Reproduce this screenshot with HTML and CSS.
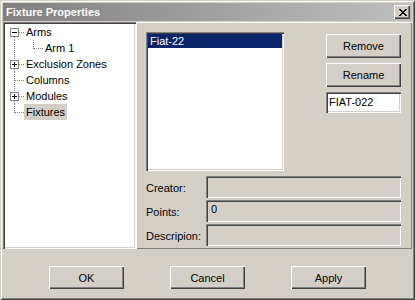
FILE: index.html
```html
<!DOCTYPE html>
<html lang="en">

<head>
    <meta charset="UTF-8">
    <title>Fixture Properties</title>
    <link rel="stylesheet" href="styles.css">
</head>

<body>
    <div class="window">
        <div class="titlebar">
            <span class="title">Fixture Properties</span>
            <div class="close">
                <svg width="8" height="7" viewBox="0 0 8 7">
                    <path d="M0 0h2v1h1v1h2v-1h1v-1h2v1h-1v1h-1v1h-1v1h1v1h1v1h1v1h-2v-1h-1v-1h-2v1h-1v1h-2v-1h1v-1h1v-1h1v-1h-1v-1h-1v-1h-1z" fill="#000"/>
                </svg>
            </div>
        </div>

        <div class="main">
            <div class="tree">
                <div class="row">
                    <svg class="guide" width="19" height="16">
                        <path d="M9.5 13v3" class="dots"/>
                        <path d="M14 8.5h5" class="dots"/>
                        <rect x="5.5" y="4.5" width="8" height="8" class="box"/>
                        <path d="M7 8.5h5" class="sign"/>
                    </svg>
                    <span class="label">Arms</span>
                </div>
                <div class="row">
                    <svg class="guide" width="38" height="16">
                        <path d="M9.5 0v16" class="dots"/>
                        <path d="M28.5 0v9" class="dots"/>
                        <path d="M29 8.5h9" class="dots"/>
                    </svg>
                    <span class="label">Arm 1</span>
                </div>
                <div class="row">
                    <svg class="guide" width="19" height="16">
                        <path d="M9.5 0v4M9.5 13v3" class="dots"/>
                        <path d="M14 8.5h5" class="dots"/>
                        <rect x="5.5" y="4.5" width="8" height="8" class="box"/>
                        <path d="M7 8.5h5M9.5 6v5" class="sign"/>
                    </svg>
                    <span class="label">Exclusion Zones</span>
                </div>
                <div class="row">
                    <svg class="guide" width="19" height="16">
                        <path d="M9.5 0v16" class="dots"/>
                        <path d="M10 8.5h9" class="dots"/>
                    </svg>
                    <span class="label">Columns</span>
                </div>
                <div class="row">
                    <svg class="guide" width="19" height="16">
                        <path d="M9.5 0v4M9.5 13v3" class="dots"/>
                        <path d="M14 8.5h5" class="dots"/>
                        <rect x="5.5" y="4.5" width="8" height="8" class="box"/>
                        <path d="M7 8.5h5M9.5 6v5" class="sign"/>
                    </svg>
                    <span class="label">Modules</span>
                </div>
                <div class="row">
                    <svg class="guide" width="19" height="16">
                        <path d="M9.5 0v9" class="dots"/>
                        <path d="M10 8.5h9" class="dots"/>
                    </svg>
                    <span class="label current">Fixtures</span>
                </div>
            </div>

            <div class="panel">
                <div class="top">
                    <div class="listbox">
                        <div class="item selected">Fiat-22</div>
                    </div>
                    <div class="actions">
                        <div class="btn">Remove</div>
                        <div class="btn">Rename</div>
                        <div class="textbox">FIAT-022</div>
                    </div>
                </div>
                <div class="fields">
                    <div class="field-row">
                        <span class="field-label">Creator:</span>
                        <div class="field"></div>
                    </div>
                    <div class="field-row">
                        <span class="field-label">Points:</span>
                        <div class="field">0</div>
                    </div>
                    <div class="field-row">
                        <span class="field-label">Descripion:</span>
                        <div class="field"></div>
                    </div>
                </div>
            </div>
        </div>

        <div class="footer">
            <div class="btn">OK</div>
            <div class="btn">Cancel</div>
            <div class="btn">Apply</div>
        </div>
    </div>
</body>

</html>
```

FILE: styles.css
```css
body {
    margin: 0;
    background-color: #d4d0c8;
    font-family: "Liberation Sans", Arial, sans-serif;
    font-size: 11px;
    color: black;
}

.window {
    width: 415px;
    height: 300px;
    box-sizing: border-box;
    padding: 3px;
    background-color: #d4d0c8;
    box-shadow: inset 1px 1px #d4d0c8, inset -1px -1px #404040, inset 2px 2px #ffffff, inset -2px -2px #808080;
    display: flex;
    flex-direction: column;
}

.titlebar {
    height: 18px;
    background: linear-gradient(to right, #808080, #c0c0c0);
    display: flex;
    align-items: center;
    justify-content: space-between;
    padding: 0 2px 0 3px;
}

.title {
    color: white;
    font-weight: bold;
    font-size: 11px;
}

.close {
    width: 16px;
    height: 14px;
    box-sizing: border-box;
    background-color: #d4d0c8;
    box-shadow: inset 1px 1px #ffffff, inset -1px -1px #404040, inset -2px -2px #808080;
    display: flex;
    align-items: center;
    justify-content: center;
    padding-left: 1px;
}

.main {
    margin-top: 1px;
    height: 227px;
    display: flex;
}

/* tree view */

.tree {
    width: 133px;
    box-sizing: border-box;
    padding: 2px;
    background-color: white;
    box-shadow: inset 1px 1px #808080, inset 2px 2px #404040, inset -1px -1px #ffffff, inset -2px -2px #d4d0c8;
}

.row {
    height: 16px;
    display: flex;
    align-items: center;
}

.guide {
    flex-shrink: 0;
    shape-rendering: crispEdges;
}

.dots {
    stroke: #808080;
    stroke-width: 1;
    stroke-dasharray: 1 1;
    fill: none;
}

.box {
    stroke: #808080;
    fill: white;
}

.sign {
    stroke: black;
    stroke-width: 1;
}

.label {
    padding: 1px 2px;
    line-height: 14px;
    white-space: nowrap;
}

.label.current {
    background-color: #d4d0c8;
}

/* right panel */

.panel {
    flex: 1;
    box-shadow: inset 1px 1px #ffffff, inset -1px -1px #808080;
    display: flex;
    flex-direction: column;
    padding: 10px 11px 0 10px;
}

.top {
    display: flex;
}

.listbox {
    width: 138px;
    height: 139px;
    box-sizing: border-box;
    padding: 2px;
    background-color: white;
    box-shadow: inset 1px 1px #808080, inset 2px 2px #404040, inset -1px -1px #ffffff, inset -2px -2px #d4d0c8;
}

.item {
    height: 14px;
    line-height: 14px;
    padding-left: 2px;
}

.item.selected {
    background-color: #0a246a;
    color: white;
}

.actions {
    margin-left: auto;
    padding-top: 2px;
    display: flex;
    flex-direction: column;
    gap: 5px;
}

.btn {
    width: 75px;
    height: 24px;
    box-sizing: border-box;
    background-color: #d4d0c8;
    box-shadow: inset 1px 1px #ffffff, inset -1px -1px #404040, inset -2px -2px #808080;
    display: flex;
    align-items: center;
    justify-content: center;
}

.textbox {
    width: 75px;
    height: 21px;
    box-sizing: border-box;
    background-color: white;
    box-shadow: inset 1px 1px #808080, inset 2px 2px #404040, inset -1px -1px #ffffff, inset -2px -2px #d4d0c8;
    padding: 4px 3px;
    line-height: 13px;
}

.fields {
    margin-top: 5px;
    display: flex;
    flex-direction: column;
    gap: 2px;
}

.field-row {
    display: flex;
    align-items: center;
}

.field-label {
    width: 60px;
    flex-shrink: 0;
    padding-top: 2px;
}

.field {
    flex: 1;
    height: 22px;
    box-sizing: border-box;
    padding: 3px 5px;
    line-height: 13px;
    box-shadow: inset 1px 1px #808080, inset 2px 2px #404040, inset -1px -1px #ffffff, inset -2px -2px #d4d0c8;
}

.footer {
    display: flex;
    justify-content: center;
    gap: 46px;
    padding-top: 17px;
}

.footer .btn {
    height: 23px;
}
```
